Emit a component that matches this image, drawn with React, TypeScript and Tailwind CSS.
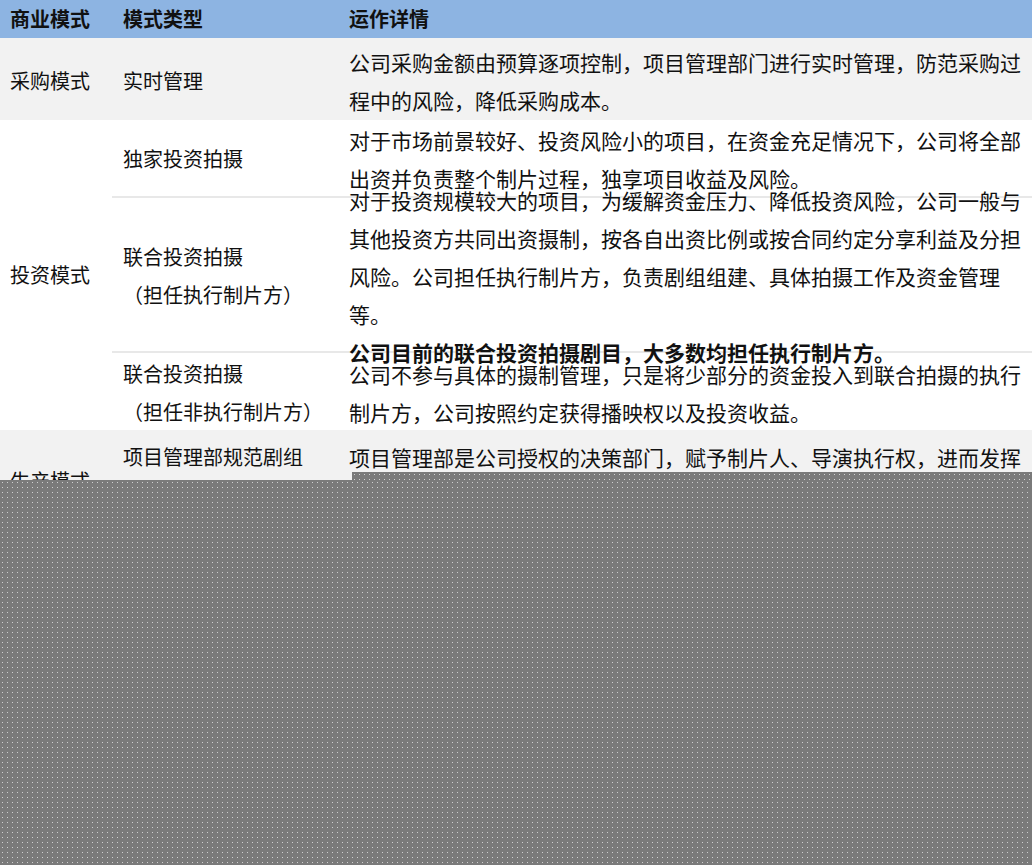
export default function App() {
  const font = { fontFamily: '"Microsoft YaHei","Noto Sans CJK SC",sans-serif' };
  return (
    <div className="relative w-[1032px] h-[865px] bg-white text-[21px] leading-[38px] text-[#111] overflow-hidden" style={font}>
      <div className="flex h-[38px] items-center bg-[#8db4e2] font-bold text-[20px]">
        <div className="w-[112px] pl-[10px]">商业模式</div>
        <div className="w-[227px] pl-[11px]">模式类型</div>
        <div className="flex-1 pl-[10px]">运作详情</div>
      </div>
      <div className="flex h-[82px] items-center bg-[#f2f2f2] pt-[4px]">
        <div className="w-[112px] pl-[10px] text-[20px]">采购模式</div>
        <div className="w-[227px] pl-[11px] text-[20px]">实时管理</div>
        <div className="flex-1 pl-[10px] pr-[2px]">公司采购金额由预算逐项控制，项目管理部门进行实时管理，防范采购过程中的风险，降低采购成本。</div>
      </div>
      <div className="flex h-[310px] bg-white">
        <div className="w-[112px] pl-[10px] flex items-center text-[20px]">投资模式</div>
        <div className="flex-1 flex flex-col">
          <div className="flex h-[78px] items-center border-b-2 border-[#e8e8e8] pt-[2px]">
            <div className="w-[227px] pl-[11px] text-[20px]">独家投资拍摄</div>
            <div className="flex-1 pl-[10px] pr-[2px]">对于市场前景较好、投资风险小的项目，在资金充足情况下，公司将全部出资并负责整个制片过程，独享项目收益及风险。</div>
          </div>
          <div className="flex h-[155px] items-center border-b-2 border-[#e8e8e8] pt-[2px]">
            <div className="w-[227px] pl-[11px] text-[20px]">联合投资拍摄<br />（担任执行制片方）</div>
            <div className="flex-1 pl-[10px] pr-[2px]">对于投资规模较大的项目，为缓解资金压力、降低投资风险，公司一般与其他投资方共同出资摄制，按各自出资比例或按合同约定分享利益及分担风险。公司担任执行制片方，负责剧组组建、具体拍摄工作及资金管理等。<b className="block">公司目前的联合投资拍摄剧目，大多数均担任执行制片方。</b></div>
          </div>
          <div className="flex h-[77px] items-center pt-[2px]">
            <div className="w-[227px] pl-[11px] text-[20px]">联合投资拍摄<br />（担任非执行制片方）</div>
            <div className="flex-1 pl-[10px] pr-[2px]">公司不参与具体的摄制管理，只是将少部分的资金投入到联合拍摄的执行制片方，公司按照约定获得播映权以及投资收益。</div>
          </div>
        </div>
      </div>
      <div className="flex h-[120px] bg-[#f2f2f2] pt-[8px]">
        <div className="w-[112px] pl-[10px] pt-[24px] text-[20px]">生产模式</div>
        <div className="w-[227px] pl-[11px] text-[20px]">项目管理部规范剧组</div>
        <div className="flex-1 pl-[10px] pr-[2px]">项目管理部是公司授权的决策部门，赋予制片人、导演执行权，进而发挥</div>
      </div>
      <div className="absolute left-0 right-0 top-[480px] bottom-0 bg-[#7a7a7a] bg-[radial-gradient(circle,#cfcfcf_0.7px,transparent_1px)] bg-[length:5px_5px]" />
      <div className="absolute left-[352px] right-0 top-[472px] h-[8px] bg-[#7a7a7a] bg-[radial-gradient(circle,#cfcfcf_0.7px,transparent_1px)] bg-[length:5px_5px]" />
    </div>
  );
}
